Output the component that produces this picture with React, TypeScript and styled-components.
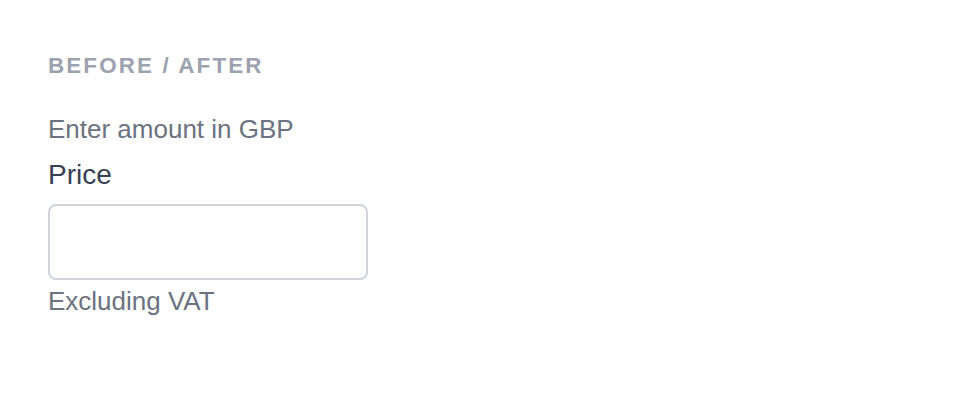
import React from "react";
import styled, { createGlobalStyle } from "styled-components";

const Global = createGlobalStyle`
  html, body { margin: 0; padding: 0; background: #ffffff; }
  body { font-family: "Liberation Sans", Arial, Helvetica, sans-serif; }
`;

const Page = styled.div`
  padding: 52px 48px;
  display: flex;
  flex-direction: column;
  align-items: flex-start;
`;

const Heading = styled.h2`
  margin: 0 0 31px;
  font-size: 22.4px;
  line-height: 28px;
  font-weight: 700;
  letter-spacing: 0.095em;
  text-transform: uppercase;
  color: #9ca3af;
`;

const Field = styled.div`
  display: flex;
  flex-direction: column;
  align-items: flex-start;
`;

const Hint = styled.p`
  margin: 0;
  font-size: 26px;
  line-height: 36px;
  color: #6b7280;
`;

const Label = styled.label`
  margin: 10px 0 11px;
  font-size: 28px;
  line-height: 36px;
  color: #374151;
`;

const Input = styled.input`
  box-sizing: border-box;
  width: 320px;
  height: 76px;
  border: 2px solid #d1d5db;
  border-radius: 8px;
  background: #fff;
  padding: 0 16px;
  font: inherit;
  font-size: 26px;
  outline: none;
`;

const Help = styled(Hint)`
  margin-top: 3px;
`;

export default function App() {
  return (
    <>
      <Global />
      <Page>
        <Heading>Before / After</Heading>
        <Field>
          <Hint>Enter amount in GBP</Hint>
          <Label htmlFor="price">Price</Label>
          <Input id="price" type="text" />
          <Help>Excluding VAT</Help>
        </Field>
      </Page>
    </>
  );
}
